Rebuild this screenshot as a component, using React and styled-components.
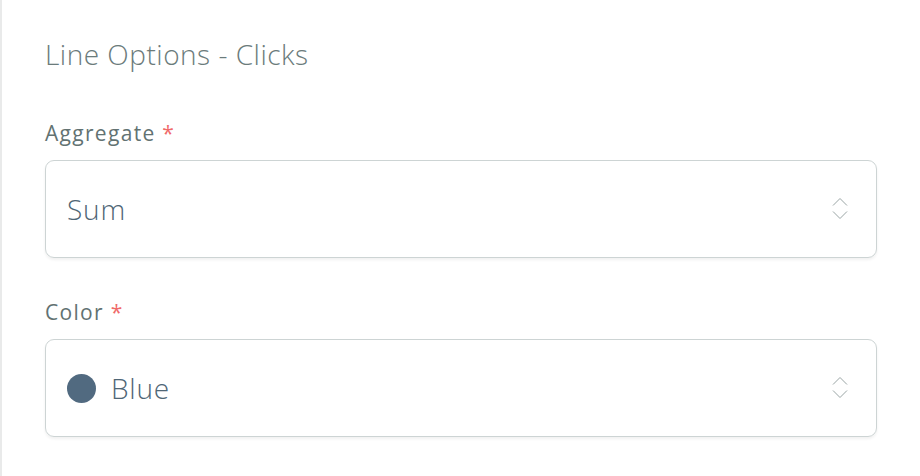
import React from "react";
import styled, { createGlobalStyle } from "styled-components";

const GlobalStyle = createGlobalStyle`
  html, body {
    margin: 0;
    padding: 0;
    background: #ffffff;
  }
  body {
    font-family: "Open Sans", "Noto Sans", sans-serif;
  }
`;

export default function App() {
  return (
    <>
      <GlobalStyle />
      <Panel>
        <Title>Line Options - Clicks</Title>
        <Field>
          <Label>
            Aggregate <Required>*</Required>
          </Label>
          <Select>
            <Value>Sum</Value>
            <Chevrons />
          </Select>
        </Field>
        <Field>
          <Label>
            Color <Required>*</Required>
          </Label>
          <Select>
            <Value>
              <Swatch color="#516a80" />
              Blue
            </Value>
            <Chevrons />
          </Select>
        </Field>
      </Panel>
    </>
  );
}

function Chevrons() {
  return (
    <ChevronIcon width="16" height="24" viewBox="0 0 16 24" fill="none">
      <path d="M1 8.5L8 1.5L15 8.5" stroke="#9aa5a5" strokeWidth="1" />
      <path d="M1 14.5L8 21.5L15 14.5" stroke="#9aa5a5" strokeWidth="1" />
    </ChevronIcon>
  );
}

const Panel = styled.div`
  height: 476px;
  box-sizing: border-box;
  border-left: 2px solid #e9eaea;
  padding: 34px 43px 0 43px;
  display: flex;
  flex-direction: column;
`;

const Title = styled.h2`
  margin: 0 0 45px 0;
  font-size: 28px;
  font-weight: 300;
  line-height: 40px;
  letter-spacing: 0.5px;
  color: #6b7b7b;
`;

const Field = styled.div`
  display: flex;
  flex-direction: column;
  gap: 13px;
  margin-bottom: 40px;
`;

const Label = styled.div`
  font-size: 21px;
  font-weight: 400;
  line-height: 28px;
  letter-spacing: 1.3px;
  color: #627272;
`;

const Required = styled.span`
  color: #f06a6a;
`;

const Select = styled.div`
  height: 98px;
  box-sizing: border-box;
  border: 1px solid #cdd4d4;
  border-radius: 9px;
  box-shadow: 0 2px 3px rgba(0, 0, 0, 0.06);
  padding: 0 28px 0 21px;
  display: flex;
  align-items: center;
  justify-content: space-between;
`;

const Value = styled.div`
  display: flex;
  align-items: center;
  gap: 15px;
  font-size: 28px;
  font-weight: 300;
  letter-spacing: 0.8px;
  color: #4f6676;
`;

const Swatch = styled.span`
  width: 29px;
  height: 29px;
  border-radius: 50%;
  background: ${(p) => p.color};
`;

const ChevronIcon = styled.svg`
  display: block;
`;
